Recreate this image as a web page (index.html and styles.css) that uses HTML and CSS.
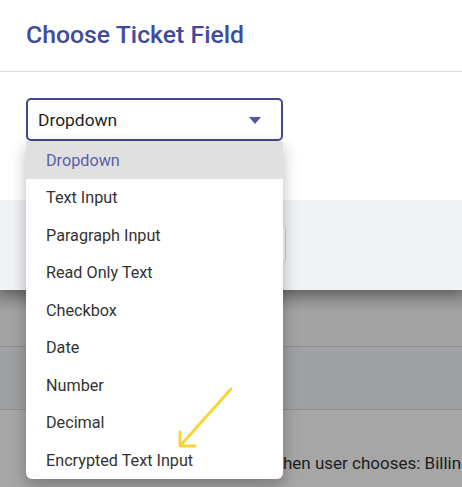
FILE: index.html
```html
<!DOCTYPE html>
<html>
<head>
<meta charset="utf-8">
<link rel="stylesheet" href="styles.css">
</head>
<body>
<div class="page">
  <div class="dialog">
    <div class="dialog-header">
      <h1 class="title">Choose Ticket Field</h1>
    </div>
    <div class="dialog-body">
      <div class="select">
        <span class="select-value">Dropdown</span>
        <svg class="caret" width="12" height="7" viewBox="0 0 12 7"><path d="M0 0 L12 0 L6 7 Z" fill="#5257a3"/></svg>
      </div>
    </div>
    <div class="dialog-footer">
      <div class="ghost-btn"></div>
    </div>
  </div>
  <div class="backdrop">
    <div class="bg-row bg-row-1"></div>
    <div class="bg-row bg-row-2"></div>
    <div class="bg-row bg-row-3"><span class="bg-text">Show when user chooses: Billing</span></div>
  </div>
  <ul class="menu">
    <li class="item active">Dropdown</li>
    <li class="item">Text Input</li>
    <li class="item">Paragraph Input</li>
    <li class="item">Read Only Text</li>
    <li class="item">Checkbox</li>
    <li class="item">Date</li>
    <li class="item">Number</li>
    <li class="item">Decimal</li>
    <li class="item">Encrypted Text Input</li>
  </ul>
  <svg class="arrow" width="70" height="70" viewBox="0 0 70 70">
    <path d="M62 8 L11 65 M11 51 L11 65 L26 65" fill="none" stroke="#f6d43c" stroke-width="3" stroke-linecap="round" stroke-linejoin="round"/>
  </svg>
</div>
</body>
</html>
```
FILE: styles.css
```css
html, body {
  margin: 0;
  padding: 0;
  background: #a5a5a5;
  overflow: hidden;
}
.page {
  position: relative;
  width: 462px;
  height: 487px;
  font-family: Roboto, "Liberation Sans", sans-serif;
  overflow: hidden;
}
.dialog {
  position: relative;
  z-index: 2;
  background: #fff;
  height: 290px;
  display: flex;
  flex-direction: column;
  box-shadow: 0 4px 14px rgba(0,0,0,0.35);
}
.dialog-header {
  height: 72px;
  box-sizing: border-box;
  border-bottom: 1px solid #dcdcdc;
  padding: 20px 26px 0;
}
.title {
  margin: 0;
  font-size: 24.8px;
  font-weight: 500;
  color: #3f4b9b;
  line-height: 30px;
}
.dialog-body {
  height: 128px;
  box-sizing: border-box;
  padding: 26px 26px 0;
}
.select {
  width: 257px;
  height: 43px;
  box-sizing: border-box;
  border: 2px solid #414b8c;
  border-radius: 5px;
  display: flex;
  align-items: center;
  justify-content: space-between;
  padding: 0 20px 0 10px;
}
.select-value {
  font-size: 17.4px;
  color: #1f1f1f;
}
.caret {
  display: block;
  margin-top: 2px;
}
.dialog-footer {
  flex: 1;
  background: #f1f2f6;
  padding: 25px 0 0 180px;
}
.ghost-btn {
  width: 106px;
  height: 38px;
  box-sizing: border-box;
  border: 1px solid #cfcfd4;
  border-radius: 5px;
  background: #fff;
}
.backdrop {
  display: flex;
  flex-direction: column;
}
.bg-row-1 {
  height: 56px;
  background: linear-gradient(#8a8a8a, #a3a3a3 40%);
  border-bottom: 1px solid #8f8f91;
}
.bg-row-2 {
  height: 62px;
  background: #9fa0a3;
  border-bottom: 1px solid #909093;
}
.bg-row-3 {
  height: 80px;
  background: #a6a6a6;
  padding-left: 224px;
  box-sizing: border-box;
  padding-top: 43px;
}
.bg-text {
  font-size: 17px;
  color: #1c1c1c;
  white-space: nowrap;
}
.menu {
  position: absolute;
  z-index: 5;
  left: 26px;
  top: 141px;
  width: 257px;
  margin: 0;
  padding: 0;
  list-style: none;
  background: #fff;
  border-radius: 0 0 6px 6px;
  box-shadow: 0 6px 16px rgba(0,0,0,0.28);
  overflow: hidden;
}
.item {
  height: 37.5px;
  box-sizing: border-box;
  padding-top: 1.5px;
  line-height: 36px;
  padding-left: 20px;
  font-size: 16.2px;
  color: #333;
}
.item.active {
  background: #e0e0e0;
  color: #5a5ea8;
}
.arrow {
  position: absolute;
  z-index: 6;
  left: 169px;
  top: 381px;
}
```
